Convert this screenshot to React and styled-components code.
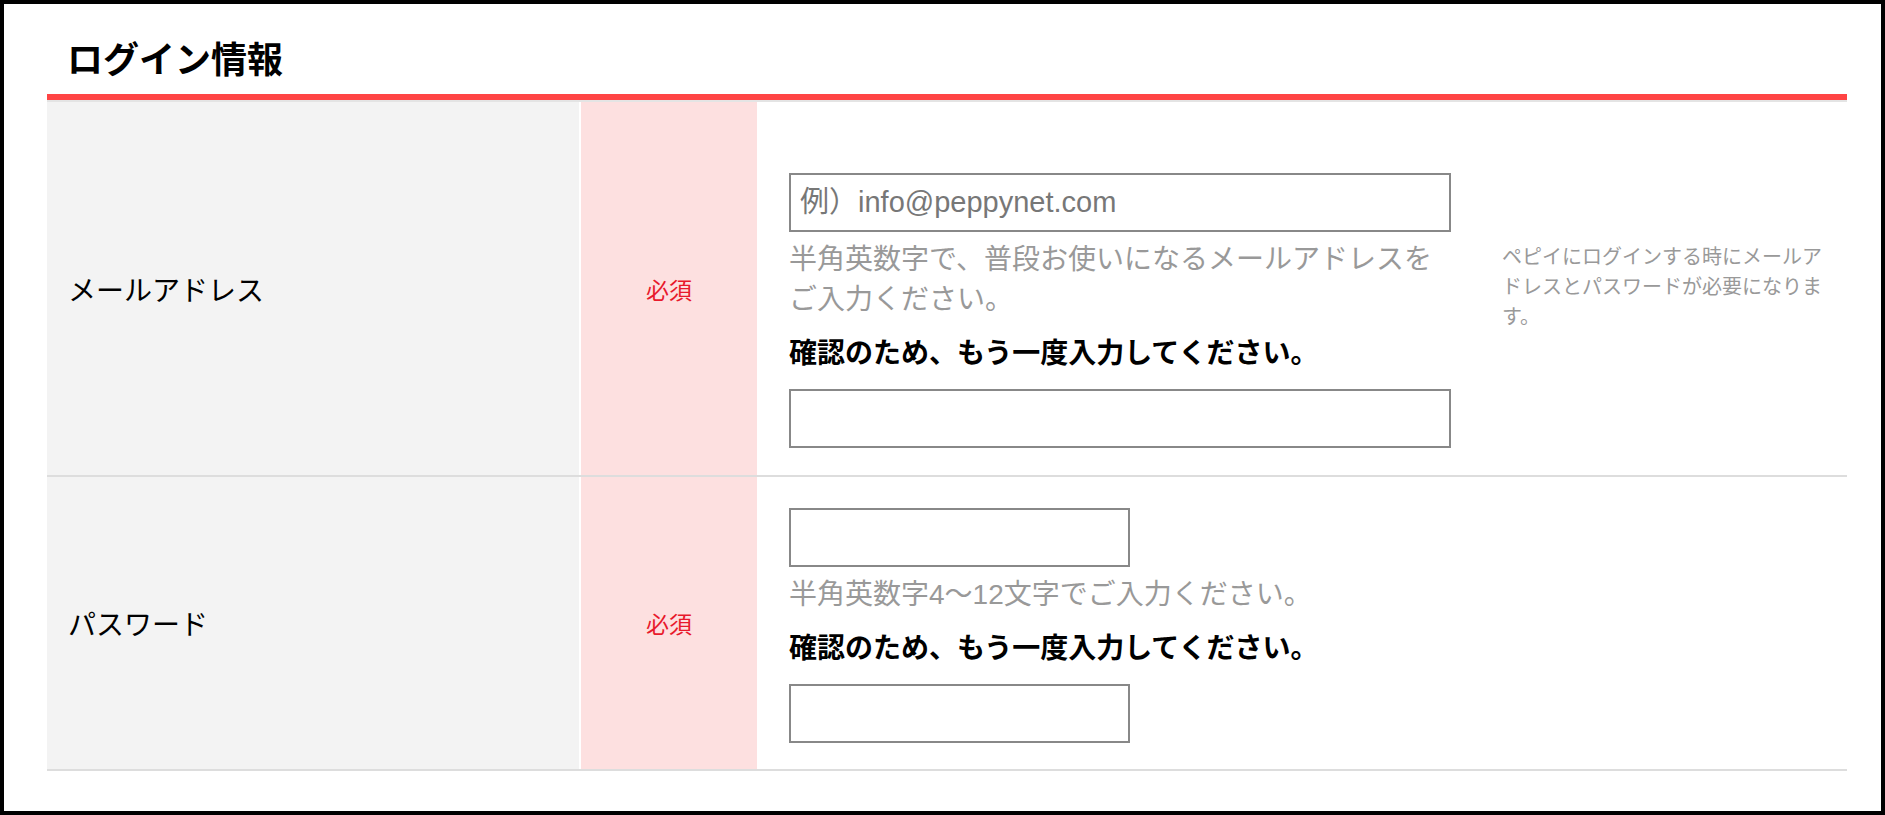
import React from "react";
import styled, { createGlobalStyle } from "styled-components";

const GlobalStyle = createGlobalStyle`
  html, body {
    margin: 0;
    padding: 0;
    background: #fff;
  }
  body {
    font-family: "Liberation Sans", "Noto Sans CJK JP", sans-serif;
    color: #000;
  }
`;

const rows = [
  {
    key: "mail",
    label: "メールアドレス",
    top: 71,
    bottom: 27,
    width: 662,
    placeholder: "例）info@peppynet.com",
    hint: "半角英数字で、普段お使いになるメールアドレスをご入力ください。",
    note: "ペピイにログインする時にメールアドレスとパスワードが必要になります。",
  },
  {
    key: "pass",
    label: "パスワード",
    top: 31,
    bottom: 26,
    width: 341,
    placeholder: "",
    hint: "半角英数字4〜12文字でご入力ください。",
    note: null,
  },
];

export default function App() {
  return (
    <>
      <GlobalStyle />
      <Page>
        <Heading>ログイン情報</Heading>
        <Table>
          {rows.map((row) => (
            <Row key={row.key}>
              <LabelCell>{row.label}</LabelCell>
              <RequiredCell>必須</RequiredCell>
              <FieldCell $top={row.top} $bottom={row.bottom}>
                <Fields>
                  <TextInput
                    type="text"
                    $width={row.width}
                    placeholder={row.placeholder}
                  />
                  <Hint>{row.hint}</Hint>
                  <Confirm>確認のため、もう一度入力してください。</Confirm>
                  <TextInput type="text" $width={row.width} $spaced />
                </Fields>
                {row.note && <Note>{row.note}</Note>}
              </FieldCell>
            </Row>
          ))}
        </Table>
      </Page>
    </>
  );
}

const Page = styled.div`
  box-sizing: border-box;
  height: 815px;
  border: 4px solid #000;
  padding: 30px 34px 0 43px;
`;

const Heading = styled.h2`
  margin: 0;
  padding-left: 20px;
  font-size: 36px;
  line-height: 54px;
  font-weight: bold;
  padding-bottom: 6px;
  border-bottom: 6px solid #ff4444;
`;

const Table = styled.div`
  border-top: 2px solid #e4e4e4;
`;

const Row = styled.div`
  display: grid;
  grid-template-columns: 532px 176px 1fr;
  column-gap: 2px;
  border-bottom: 2px solid #dddddd;
  background: #fff;
`;

const LabelCell = styled.div`
  display: flex;
  align-items: center;
  padding-left: 21px;
  background: #f3f3f3;
  font-size: 28px;
`;

const RequiredCell = styled.div`
  display: flex;
  align-items: center;
  justify-content: center;
  background: #fde0e0;
  color: #e8192c;
  font-size: 23px;
`;

const FieldCell = styled.div`
  display: flex;
  align-items: flex-start;
  padding: ${(p) => p.$top}px 0 ${(p) => p.$bottom}px 30px;
`;

const Fields = styled.div`
  width: 662px;
  flex-shrink: 0;
`;

const TextInput = styled.input`
  display: block;
  box-sizing: border-box;
  width: ${(p) => p.$width}px;
  height: 59px;
  margin: ${(p) => (p.$spaced ? "15px 0 0" : "0")};
  padding: 0 9px;
  border: 2px solid #888;
  border-radius: 0;
  font-family: "Liberation Sans", "Noto Sans CJK JP", sans-serif;
  font-size: 29px;
  color: #333;
  outline: none;

  &::placeholder {
    color: #777;
  }
`;

const Hint = styled.p`
  margin: 8px 0 0;
  font-size: 28px;
  line-height: 40px;
  color: #999;
`;

const Confirm = styled.p`
  margin: 14px 0 0;
  font-size: 28px;
  line-height: 40px;
  font-weight: bold;
`;

const Note = styled.p`
  width: 320px;
  margin: 69px 0 0 51px;
  font-size: 20px;
  line-height: 30px;
  color: #999;
`;
